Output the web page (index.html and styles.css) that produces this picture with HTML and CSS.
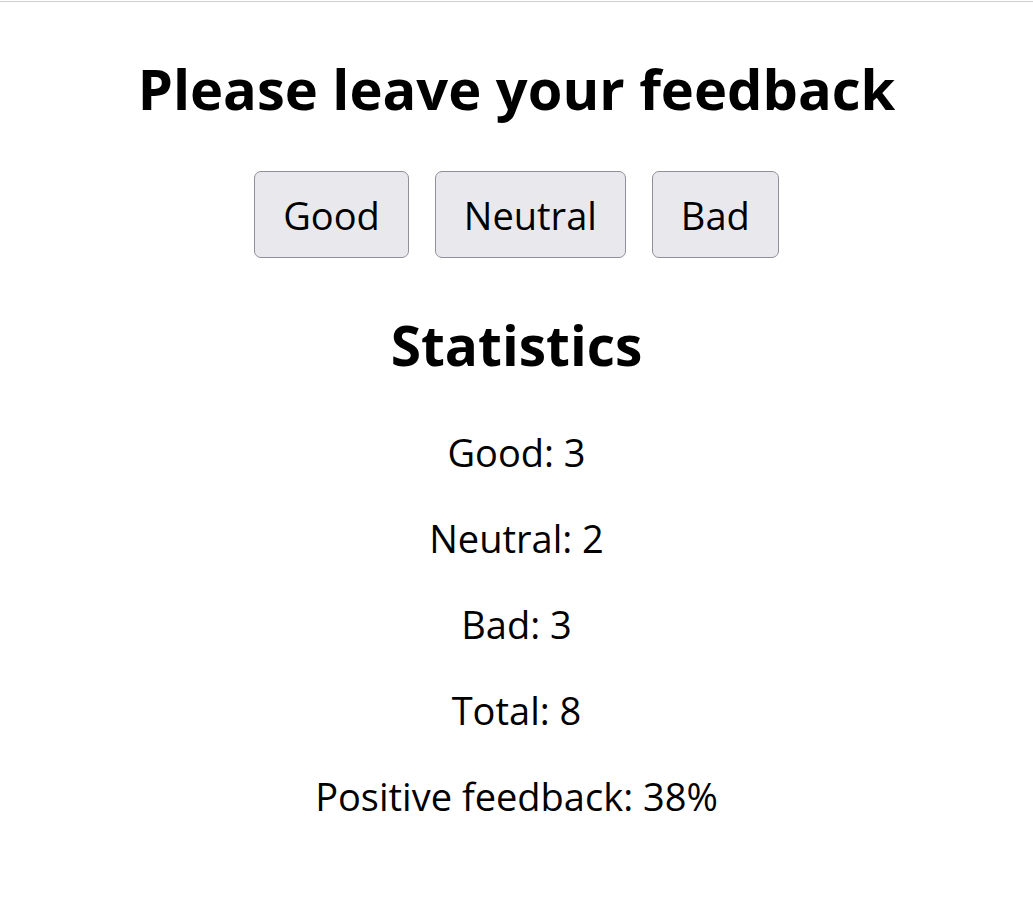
FILE: index.html
```html
<!DOCTYPE html>
<html lang="en">
<head>
<meta charset="utf-8">
<title>Feedback</title>
<link rel="stylesheet" href="styles.css">
</head>
<body>
<div class="topline"></div>
<main class="app">
  <h1 class="title">Please leave your feedback</h1>
  <div class="buttons">
    <button class="btn" type="button">Good</button>
    <button class="btn" type="button">Neutral</button>
    <button class="btn" type="button">Bad</button>
  </div>
  <h2 class="subtitle">Statistics</h2>
  <div class="stats">
    <p class="stat">Good: 3</p>
    <p class="stat">Neutral: 2</p>
    <p class="stat">Bad: 3</p>
    <p class="stat">Total: 8</p>
    <p class="stat">Positive feedback: 38%</p>
  </div>
</main>
</body>
</html>
```

FILE: styles.css
```css
html, body {
  margin: 0;
  padding: 0;
  background: #ffffff;
}
body {
  font-family: "Open Sans", "Noto Sans", sans-serif;
  color: #000000;
}
.topline {
  height: 1px;
  margin-top: 1px;
  background: #cfcfcf;
}
.app {
  display: flex;
  flex-direction: column;
  align-items: center;
  text-align: center;
}
.title {
  margin: 51px 0 0;
  font-size: 56px;
  font-weight: 700;
  line-height: 70px;
}
.buttons {
  display: flex;
  gap: 26px;
  margin-top: 48px;
}
.btn {
  font-family: inherit;
  font-size: 38px;
  height: 87px;
  padding: 0 28px;
  background: #e9e9ed;
  border: 1px solid #8f8f9d;
  border-radius: 7px;
  color: #000;
}
.subtitle {
  margin: 52px 0 0;
  font-size: 55px;
  font-weight: 700;
  line-height: 70px;
}
.stats {
  display: flex;
  flex-direction: column;
  align-items: center;
  margin-top: 49px;
  gap: 40px;
}
.stat {
  margin: 0;
  font-size: 38px;
  line-height: 46px;
}
```
